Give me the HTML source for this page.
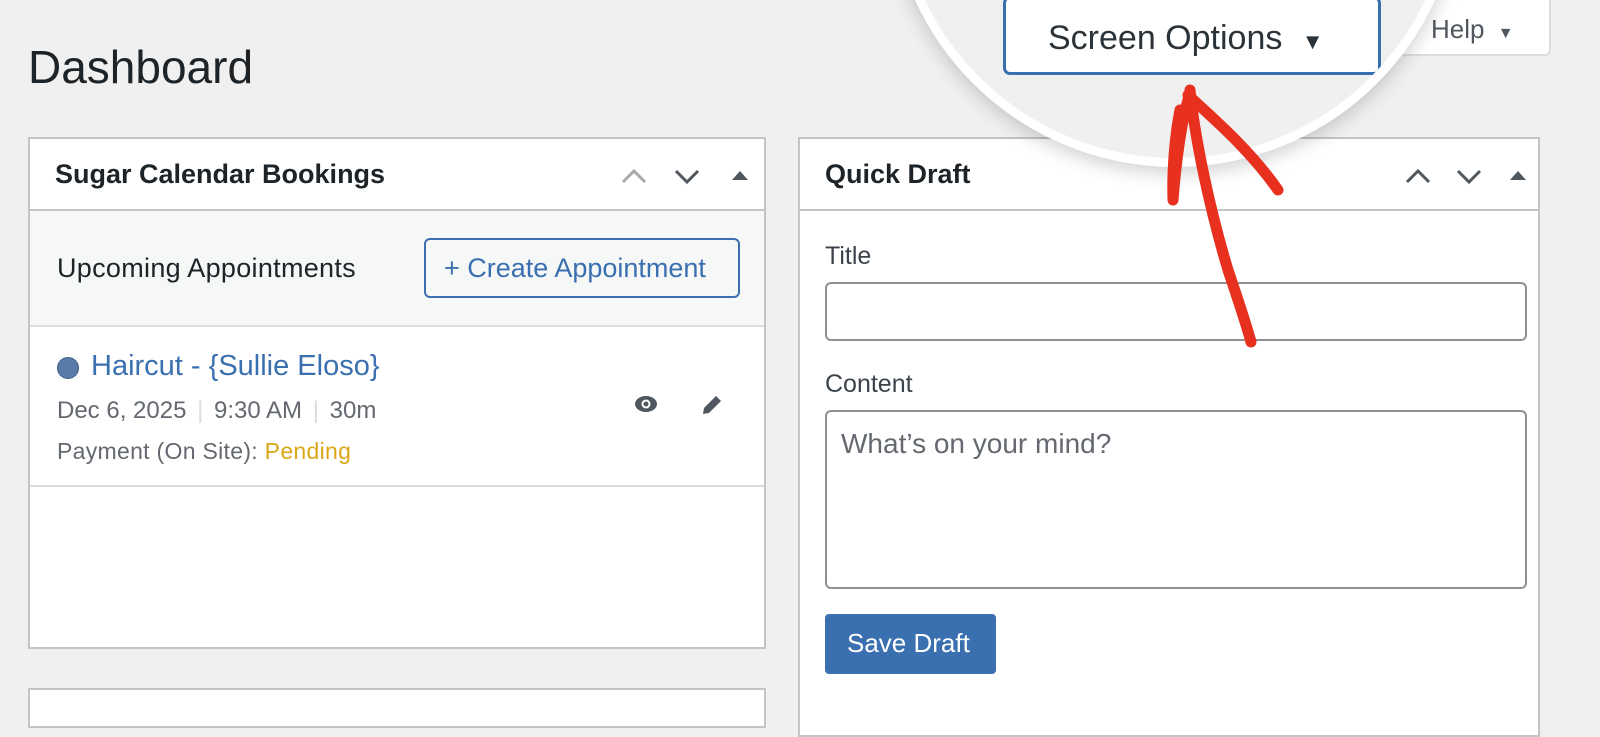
<!DOCTYPE html>
<html><head><style>
*{box-sizing:border-box;margin:0;padding:0}
body{width:1600px;height:706px;background:#f0f0f1;font-family:"Liberation Sans",sans-serif;position:relative;overflow:hidden;color:#1d2327}
.abs{position:absolute;white-space:nowrap}
.panel{position:absolute;background:#fff;border:2px solid #c3c4c7}
.hdr{position:absolute;left:0;right:0;top:0;height:72px;border-bottom:2px solid #c3c4c7}
.hdr h2{position:absolute;left:25px;top:20px;font-size:27px;font-weight:bold;color:#1d2327}
</style></head><body>
<div class="abs" style="left:28px;top:40px;font-size:46px;color:#1d2327">Dashboard</div>

<div class="panel" style="left:28px;top:137px;width:738px;height:512px">
 <div class="hdr"><h2>Sugar Calendar Bookings</h2>
  <svg class="abs" style="left:590px;top:26px" width="130" height="22" viewBox="0 0 130 22">
   <path d="M3 17 L14 6 L25 17" stroke="#a7aaad" stroke-width="3" fill="none"/>
   <path d="M56 6 L67 17 L78 6" stroke="#50575e" stroke-width="3" fill="none"/>
   <path d="M112 15 L120 6 L128 15Z" fill="#50575e"/>
  </svg></div>
 <div class="abs" style="left:0;right:0;top:72px;height:116px;background:#f6f7f7;border-bottom:2px solid #dcdcde"></div>
 <div class="abs" style="left:27px;top:114px;font-size:27px;color:#1d2327;letter-spacing:0.3px">Upcoming Appointments</div>
 <div class="abs" style="left:394px;top:99px;width:316px;height:60px;border:2px solid #3a6fb0;border-radius:6px;background:#f6f7f7;color:#3a6fb0;font-size:27px;padding:13px 0 0 18px">+ Create Appointment</div>
 <div class="abs" style="left:27px;top:218px;width:22px;height:22px;border-radius:50%;background:#5a7ca8;border:1px solid #3f5f8a"></div>
 <div class="abs" style="left:61px;top:211px;font-size:29px;color:#3a6fb0">Haircut - {Sullie Eloso}</div>
 <div class="abs" style="left:27px;top:258px;font-size:24px;color:#646970">Dec 6, 2025 <span style="color:#dcdcde;margin:0 4px">|</span> 9:30 AM <span style="color:#dcdcde;margin:0 4px">|</span> 30m</div>
 <div class="abs" style="left:27px;top:299px;font-size:23px;color:#646970;letter-spacing:0.3px">Payment (On Site): <span style="color:#dba617">Pending</span></div>
 <svg class="abs" style="left:604px;top:256px" width="24" height="18" viewBox="0 0 24 18"><ellipse cx="12" cy="9" rx="11" ry="8" fill="#50575e"/><circle cx="12" cy="9" r="4.5" fill="#fff"/><circle cx="12" cy="9" r="2.5" fill="#50575e"/></svg>
 <svg class="abs" style="left:670px;top:254px" width="24" height="24" viewBox="0 0 24 24"><path d="M3 21 L4 15 L16 3 L21 8 L9 20Z" fill="#50575e"/></svg>
 <div class="abs" style="left:0;right:0;top:346px;border-top:2px solid #dcdcde"></div>
</div>
<div class="panel" style="left:28px;top:688px;width:738px;height:40px"></div>

<div class="panel" style="left:798px;top:137px;width:742px;height:600px">
 <div class="hdr"><h2>Quick Draft</h2>
  <svg class="abs" style="left:596px;top:26px" width="130" height="22" viewBox="0 0 130 22">
   <path d="M11 17 L22 6 L33 17" stroke="#50575e" stroke-width="3" fill="none"/>
   <path d="M62 6 L73 17 L84 6" stroke="#50575e" stroke-width="3" fill="none"/>
   <path d="M114 15 L122 6 L130 15Z" fill="#50575e"/>
  </svg></div>
 <div class="abs" style="left:25px;top:103px;font-size:25px;color:#3c434a">Title</div>
 <div class="abs" style="left:25px;top:143px;width:702px;height:59px;border:2px solid #8c8f94;border-radius:6px"></div>
 <div class="abs" style="left:25px;top:231px;font-size:25px;color:#3c434a">Content</div>
 <div class="abs" style="left:25px;top:271px;width:702px;height:179px;border:2px solid #8c8f94;border-radius:6px;padding:16px 14px;font-size:28px;color:#646970">What’s on your mind?</div>
 <div class="abs" style="left:25px;top:475px;width:171px;height:60px;background:#3a6fb0;border-radius:4px;color:#fff;font-size:26px;padding:14px 0 0 22px">Save Draft</div>
</div>

<div class="abs" style="left:1395px;top:-10px;width:156px;height:66px;background:#fff;border:2px solid #dcdcde;border-radius:6px;font-size:26px;color:#50575e;padding:22px 0 0 34px">Help <span style="font-size:16px;margin-left:6px">▼</span></div>

<div class="abs" style="left:889px;top:-405px;width:572px;height:572px;border-radius:50%;background:#f0f0f1;border:9px solid #fff;box-shadow:0 6px 18px rgba(0,0,0,.18);overflow:hidden">
 <div class="abs" style="left:105px;top:392px;width:378px;height:79px;background:#fff;border:3px solid #3a6fb0;border-radius:7px;font-size:34px;color:#2c3338;padding:20px 0 0 42px">Screen Options <span style="font-size:22px;margin-left:10px">▼</span></div>
</div>

<svg class="abs" style="left:1150px;top:70px" width="150" height="290" viewBox="1150 70 150 290">
 <path d="M1173 200 C1172 170 1175 135 1180 110 M1190 90 C1195 140 1210 210 1228 270 C1238 300 1245 320 1251 342 M1188 95 C1215 120 1250 150 1278 190 M1188 100 C1182 120 1176 160 1173 200" stroke="#e8301f" stroke-width="11" fill="none" stroke-linecap="round" stroke-linejoin="round"/>
 <path d="M1186 90 L1192 86 L1188 108 Z" fill="#e8301f"/>
</svg>
</body></html>
